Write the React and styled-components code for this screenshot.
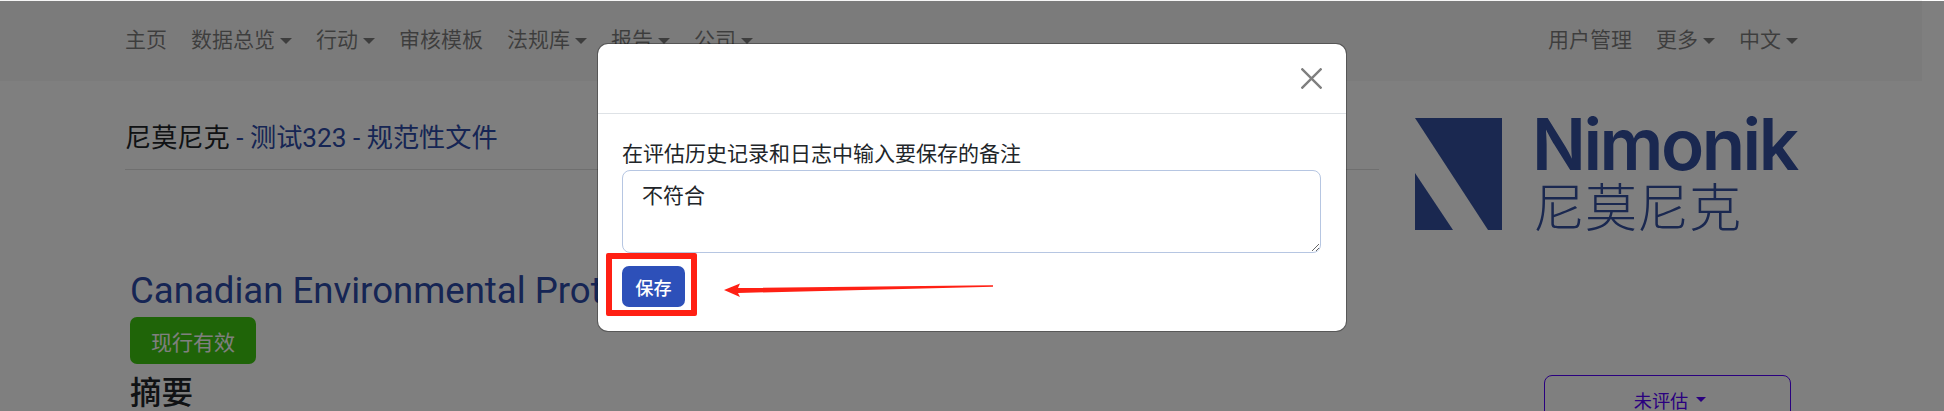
import React from "react";
import styled, { createGlobalStyle } from "styled-components";

const navLeft = [
  { label: "主页" },
  { label: "数据总览", caret: true },
  { label: "行动", caret: true },
  { label: "审核模板" },
  { label: "法规库", caret: true },
  { label: "报告", caret: true },
  { label: "公司", caret: true },
];

const navRight = [
  { label: "用户管理" },
  { label: "更多", caret: true },
  { label: "中文", caret: true },
];

const App = () => {
  return (
    <Page>
      <GlobalStyle />
      <Navbar>
        <NavList>
          {navLeft.map((item) => (
            <NavItem key={item.label} $caret={item.caret}>
              {item.label}
            </NavItem>
          ))}
        </NavList>
        <NavList>
          {navRight.map((item) => (
            <NavItem key={item.label} $caret={item.caret}>
              {item.label}
            </NavItem>
          ))}
        </NavList>
      </Navbar>

      <HeaderRow>
        <Breadcrumb>
          尼莫尼克
          <Crumbs> - 测试323 - 规范性文件</Crumbs>
        </Breadcrumb>
        <Logo>
          <LogoMark viewBox="0 0 87 112">
            <path d="M0 0H87V112H73Z" fill="#3450a0" />
            <path d="M0 55L38 112H0Z" fill="#3450a0" />
          </LogoMark>
          <LogoWords>
            <LogoName>Nimonik</LogoName>
            <LogoLocal>尼莫尼克</LogoLocal>
          </LogoWords>
        </Logo>
      </HeaderRow>

      <Content>
        <DocTitle>Canadian Environmental Protection Act</DocTitle>
        <StatusBadge>现行有效</StatusBadge>
        <SummaryRow>
          <SummaryTitle>摘要</SummaryTitle>
          <EvalButton>未评估</EvalButton>
        </SummaryRow>
      </Content>

      <Backdrop />

      <Modal>
        <ModalHeader>
          <CloseButton viewBox="0 0 21 21" aria-label="close">
            <path d="M0.5 0.5L20.5 20.5M20.5 0.5L0.5 20.5" stroke="#7f7f7f" strokeWidth="2.4" fill="none" />
          </CloseButton>
        </ModalHeader>
        <ModalBody>
          <NoteLabel>在评估历史记录和日志中输入要保存的备注</NoteLabel>
          <NoteInput readOnly defaultValue="不符合" />
          <SaveWrap>
            <SaveButton>保存</SaveButton>
            <Highlight />
            <Arrow viewBox="0 0 270 16">
              <path d="M0 7L16 0.5L14 5L269 2.2V3.8L14 10L16 14Z" fill="#ff2014" />
            </Arrow>
          </SaveWrap>
        </ModalBody>
      </Modal>
    </Page>
  );
};

export default App;

const GlobalStyle = createGlobalStyle`
  html, body {
    margin: 0;
    padding: 0;
    background: #fff;
  }
  * {
    box-sizing: border-box;
  }
`;

const Page = styled.div`
  position: relative;
  display: flex;
  flex-direction: column;
  width: 1944px;
  height: 411px;
  overflow: hidden;
  background: #fff;
  color: #212529;
  font-family: Roboto, "Noto Sans CJK SC", sans-serif;
  font-size: 21px;
`;

const Navbar = styled.nav`
  display: flex;
  flex: none;
  align-items: center;
  justify-content: space-between;
  width: 1922px;
  height: 81px;
  padding: 0 112px 0 113px;
  background: #f6f6f6;
`;

const NavList = styled.div`
  display: flex;
  align-items: center;
`;

const NavItem = styled.a`
  display: flex;
  align-items: center;
  padding: 0 12px;
  color: rgba(0, 0, 0, 0.5);
  line-height: 31px;

  &::after {
    display: ${(props) => (props.$caret ? "block" : "none")};
    content: "";
    margin-left: 5px;
    border-top: 6.2px solid currentColor;
    border-left: 6.2px solid transparent;
    border-right: 6.2px solid transparent;
  }
`;

const HeaderRow = styled.div`
  display: flex;
  flex: none;
  align-items: flex-start;
  height: 149px;
  padding: 37px 0 0 125px;
`;

const Breadcrumb = styled.h2`
  width: 1254px;
  height: 52px;
  margin: 0;
  border-bottom: 1.5px solid #dedede;
  color: #212529;
  font-size: 26.2px;
  font-weight: 400;
  line-height: 40px;
`;

const Crumbs = styled.span`
  color: #2c4aa8;
`;

const Logo = styled.div`
  display: flex;
  gap: 33px;
  margin-left: 36px;
`;

const LogoMark = styled.svg`
  display: block;
  width: 87px;
  height: 112px;
`;

const LogoWords = styled.div`
  display: flex;
  flex-direction: column;
`;

const LogoName = styled.div`
  height: 62px;
  margin-left: -3px;
  color: #3450a0;
  font-family: Inter, sans-serif;
  font-size: 71px;
  font-weight: 600;
  letter-spacing: -2.5px;
  line-height: 53px;
`;

const LogoLocal = styled.div`
  margin-left: -2px;
  color: #3450a0;
  font-family: "Noto Sans CJK SC", sans-serif;
  font-size: 52px;
  font-weight: 200;
  line-height: 50px;
`;

const Content = styled.section`
  display: flex;
  flex-direction: column;
  align-items: flex-start;
  padding: 39px 153px 0 130px;
`;

const DocTitle = styled.h1`
  margin: 0 0 5px 0;
  color: #2c4aa8;
  font-size: 36.6px;
  font-weight: 400;
  line-height: 43px;
  white-space: nowrap;
`;

const StatusBadge = styled.div`
  display: flex;
  align-items: center;
  justify-content: center;
  width: 126px;
  height: 47px;
  border-radius: 7px;
  background: #3ec810;
  color: #fff;
`;

const SummaryRow = styled.div`
  display: flex;
  align-items: flex-start;
  justify-content: space-between;
  width: 100%;
  margin-top: 11px;
`;

const SummaryTitle = styled.h3`
  margin: 0;
  color: #212529;
  font-size: 31.5px;
  font-weight: 500;
  line-height: 37px;
`;

const EvalButton = styled.button`
  display: flex;
  align-items: center;
  justify-content: center;
  width: 247px;
  height: 49px;
  padding: 0 0 0 5px;
  border: 1.5px solid #5400ff;
  border-radius: 8px;
  background: transparent;
  color: #5400ff;
  font: inherit;
  font-size: 18.2px;

  &::after {
    content: "";
    margin-left: 8px;
    border-top: 5.5px solid currentColor;
    border-left: 5.5px solid transparent;
    border-right: 5.5px solid transparent;
  }
`;

const Backdrop = styled.div`
  position: absolute;
  inset: 1px 0 0 0;
  background: rgba(0, 0, 0, 0.5);
`;

const Modal = styled.div`
  position: absolute;
  top: 44px;
  left: 598px;
  display: flex;
  flex-direction: column;
  width: 748px;
  height: 287px;
  border-radius: 10px;
  background: #fff;
  box-shadow: 0 0 0 1px rgba(0, 0, 0, 0.3);
`;

const ModalHeader = styled.header`
  display: flex;
  flex: none;
  align-items: center;
  justify-content: flex-end;
  height: 70px;
  padding: 0 24px 0 0;
  border-bottom: 1.5px solid #dee2e6;
`;

const CloseButton = styled.svg`
  display: block;
  width: 21px;
  height: 21px;
`;

const ModalBody = styled.div`
  display: flex;
  flex-direction: column;
  padding: 24px 24px 0 24px;
`;

const NoteLabel = styled.label`
  color: #212529;
  line-height: 32px;
`;

const NoteInput = styled.textarea`
  display: block;
  width: 699px;
  height: 83px;
  padding: 10px 19px;
  border: 1.5px solid #b6c6e2;
  border-radius: 8px;
  outline: none;
  color: #212529;
  font: inherit;
  line-height: 31px;
`;

const SaveWrap = styled.div`
  position: relative;
  margin-top: 13px;
`;

const SaveButton = styled.button`
  display: block;
  width: 63px;
  height: 41px;
  padding: 0;
  border: none;
  border-radius: 7px;
  background: #2d50b9;
  color: #fff;
  font: inherit;
  font-size: 18.2px;
  font-weight: 500;
`;

const Highlight = styled.span`
  position: absolute;
  top: -13px;
  left: -16px;
  width: 91px;
  height: 63px;
  border: 6px solid #ff2014;
  border-radius: 2px;
`;

const Arrow = styled.svg`
  position: absolute;
  top: 17px;
  left: 102px;
  width: 270px;
  height: 16px;
`;
